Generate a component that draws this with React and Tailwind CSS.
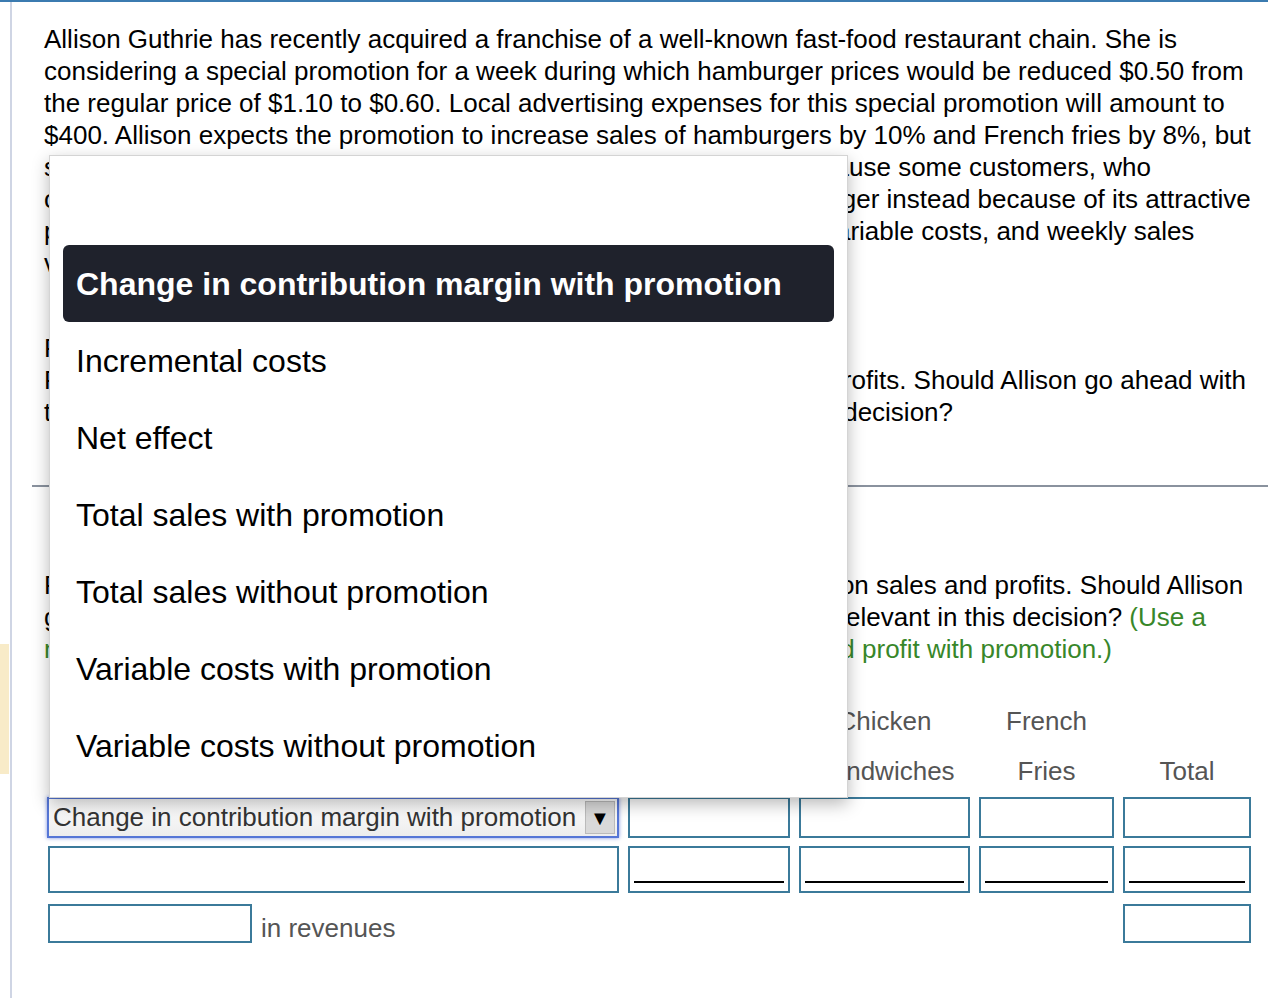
import React from 'react';

const problemLines = [
  'Allison Guthrie has recently acquired a franchise of a well-known fast-food restaurant chain. She is',
  'considering a special promotion for a week during which hamburger prices would be reduced $0.50 from',
  'the regular price of $1.10 to $0.60. Local advertising expenses for this special promotion will amount to',
  '$400. Allison expects the promotion to increase sales of hamburgers by 10% and French fries by 8%, but',
  'she anticipates that sales of chicken sandwiches will drop by 5% because some customers, who',
  'otherwise would order one chicken sandwich, will purchase a hamburger instead because of its attractive',
  'price. Information about regular selling prices of the three products, variable costs, and weekly sales',
  'volume appears below.',
];

const requirementLines = [
  'Read the requirements.',
  'Required: Evaluate the effect of this special promotion on sales and profits. Should Allison go ahead with',
  'the special promotion? What other factors are relevant in making this decision?',
];

const options = [
  '',
  'Change in contribution margin with promotion',
  'Incremental costs',
  'Net effect',
  'Total sales with promotion',
  'Total sales without promotion',
  'Variable costs with promotion',
  'Variable costs without promotion',
];

const selected = 'Change in contribution margin with promotion';

const Cell = ({ className = '', underline }) => (
  <div className={`border-2 border-[#3b7a9a] bg-white flex items-end px-[4px] pb-[8px] ${className}`}>
    {underline && <div className="w-full border-b-2 border-black" />}
  </div>
);

const DropdownMenu = () => (
  <div className="absolute left-[49px] top-[153px] w-[799px] bg-white border border-[#d4d4d4] shadow-[0_6px_16px_rgba(0,0,0,0.28)] px-[13px] pt-[12px] pb-[13px] z-10">
    {options.map((opt, i) => (
      <div
        key={i}
        className={`h-[77px] flex items-center px-[13px] rounded-[6px] text-[32px] ${
          opt === selected ? 'bg-[#1f222c] text-white font-bold' : 'text-black'
        }`}
      >
        {opt}
      </div>
    ))}
  </div>
);

const SelectBox = () => (
  <div className="h-[41px] border-2 border-[#5576d6] shadow-[0_0_4px_rgba(70,100,210,0.7)] bg-gradient-to-b from-white to-[#ededed] flex items-center pl-[4px] pr-[2px]">
    <span className="flex-1 text-[26px] text-[#333] whitespace-nowrap overflow-hidden">{selected}</span>
    <span className="w-[30px] h-[33px] bg-[#d9d9d9] border border-[#bbb] flex items-center justify-center text-[20px] text-black">▼</span>
  </div>
);

export default function App() {
  return (
    <div className="relative min-h-[998px] bg-white border-t-2 border-[#3b7bb0] font-['Liberation_Sans',Arial,sans-serif] text-black overflow-hidden">
      <div className="absolute left-0 top-[642px] w-[9px] h-[130px] bg-[#f8ebc8]" />
      <div className="flex">
        <div className="w-[10px] shrink-0" />
        <div className="w-[2px] shrink-0 bg-[#cfd5e4] min-h-[996px]" />
        <div className="flex-1 relative">
          <div className="pl-[32px] pt-[21px] text-[26px] leading-[32px] whitespace-nowrap">
            {problemLines.map((l, i) => (
              <div key={i}>{l}</div>
            ))}
            <div className="mt-[53px]">
              {requirementLines.map((l, i) => (
                <div key={i}>{l}</div>
              ))}
            </div>
          </div>

          <div className="ml-[20px] mt-[57px] h-[2px] bg-[#8a929e]" />

          <div className="pl-[32px] pt-[82px] text-[26px] leading-[32px] whitespace-nowrap">
            <div>Requirement 1. Analyze the effect of the proposed special promotion on sales and profits. Should Allison</div>
            <div>
              go ahead with this special weekly promotion? What other factors are relevant in this decision?{' '}
              <span className="text-[#38872a]">(Use a</span>
            </div>
            <div className="text-[#38872a]">minus sign or parentheses to enter a decrease in revenues, costs, and profit with promotion.)</div>
          </div>

          <div className="pl-[35px] mt-[31px] text-[26px] w-[1239px]">
            <div className="flex gap-[9px] text-[#555] leading-[50px] text-center">
              <div className="w-[572px]" />
              <div className="w-[162px]">Hamburgers<br />&nbsp;</div>
              <div className="w-[171px] whitespace-nowrap">Chicken<br />Sandwiches</div>
              <div className="w-[135px]">French<br />Fries</div>
              <div className="w-[128px]"><br />Total</div>
            </div>
            <div className="flex gap-[9px] mt-[1px]">
              <div className="w-[572px]"><SelectBox /></div>
              <Cell className="w-[162px] h-[41px]" />
              <Cell className="w-[171px] h-[41px]" />
              <Cell className="w-[135px] h-[41px]" />
              <Cell className="w-[128px] h-[41px]" />
            </div>
            <div className="flex gap-[9px] mt-[8px]">
              <Cell className="w-[571px] ml-[1px] h-[47px]" />
              <Cell className="w-[162px] h-[47px]" underline />
              <Cell className="w-[171px] h-[47px]" underline />
              <Cell className="w-[135px] h-[47px]" underline />
              <Cell className="w-[128px] h-[47px]" underline />
            </div>
            <div className="flex gap-[9px] mt-[11px] items-start">
              <Cell className="w-[204px] ml-[1px] h-[39px]" />
              <span className="text-[#555] leading-[32px] mt-[8px]">in revenues</span>
              <div className="flex-1" />
              <Cell className="w-[128px] h-[39px]" />
            </div>
          </div>
        </div>
      </div>
      <DropdownMenu />
    </div>
  );
}
